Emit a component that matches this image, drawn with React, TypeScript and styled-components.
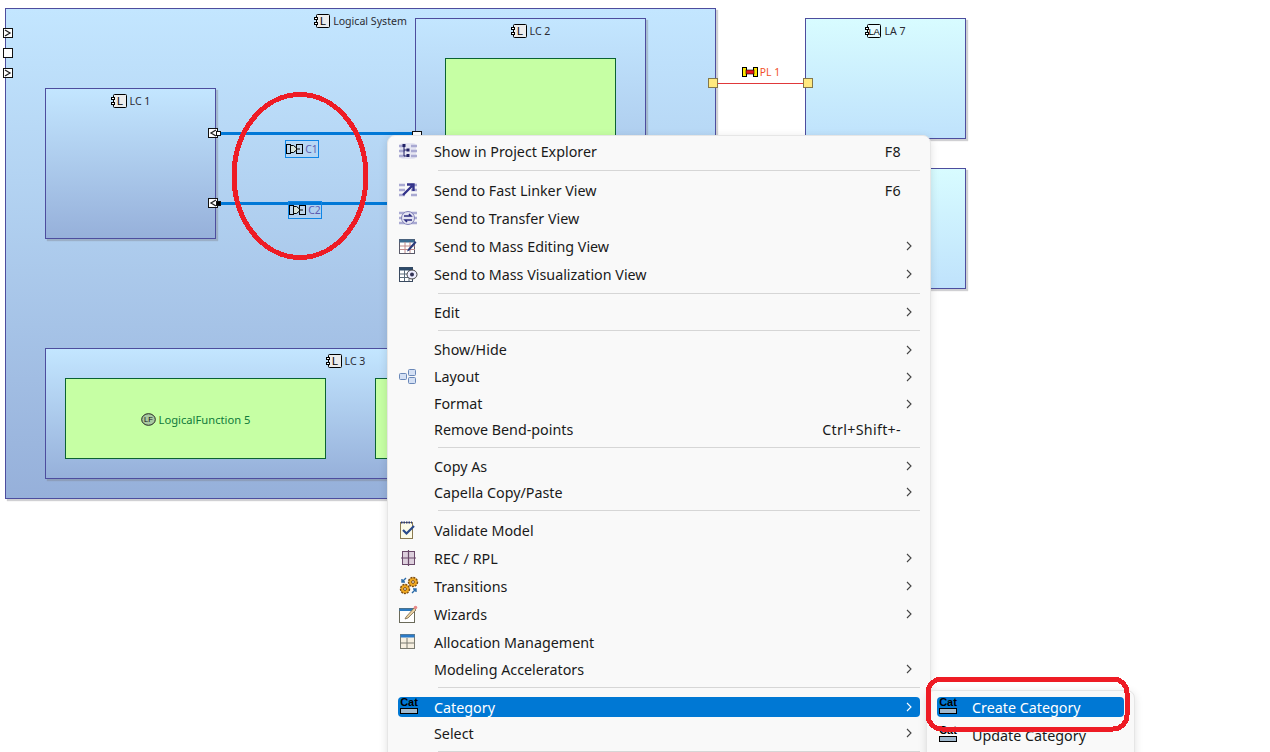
import React from "react";
import styled, { createGlobalStyle } from "styled-components";

const Global = createGlobalStyle`
  html, body { margin: 0; padding: 0; background: #fff; overflow: hidden; }
  body { font-family: "Noto Sans", "Liberation Sans", sans-serif; }
  svg { flex: none; display: block; }
`;

const Canvas = styled.div`
  position: relative;
  width: 1270px;
  height: 752px;
  overflow: hidden;
  background: #fff;
`;

const Node = styled.div<{ $x: number; $y: number; $w: number; $h: number; $kind?: "sys" | "actor" }>`
  position: absolute;
  left: ${(p) => p.$x}px;
  top: ${(p) => p.$y}px;
  width: ${(p) => p.$w}px;
  height: ${(p) => p.$h}px;
  box-sizing: border-box;
  border: 1px solid #4d4d9e;
  background: ${(p) =>
    p.$kind === "actor"
      ? "linear-gradient(180deg, #d8fcff 0%, #bfe2fc 100%)"
      : "linear-gradient(180deg, #c3e6ff 0%, #96b0da 100%)"};
  box-shadow: 2px 2px 1px rgba(120, 120, 130, 0.35);
  display: flex;
  justify-content: center;
  padding-top: 4px;
`;

const Title = styled.div`
  display: flex;
  align-items: center;
  gap: 3px;
  height: 15px;
  font-size: 10.6px;
  color: #2b2b33;
  white-space: nowrap;
`;

const FunctionBox = styled.div<{ $x: number; $y: number; $w: number; $h: number }>`
  position: absolute;
  left: ${(p) => p.$x}px;
  top: ${(p) => p.$y}px;
  width: ${(p) => p.$w}px;
  height: ${(p) => p.$h}px;
  box-sizing: border-box;
  padding-top: 1px;
  background: #c6ffa4;
  border: 1px solid #0b6233;
  display: flex;
  align-items: center;
  justify-content: center;
  gap: 3px;
  font-size: 11.2px;
  color: #0f7a3a;
`;

const Port = styled.div<{ $x: number; $y: number; $size?: number; $yellow?: boolean }>`
  position: absolute;
  left: ${(p) => p.$x}px;
  top: ${(p) => p.$y}px;
  width: ${(p) => p.$size ?? 10}px;
  height: ${(p) => p.$size ?? 10}px;
  box-sizing: border-box;
  background: ${(p) => (p.$yellow ? "#ffe97f" : "#fff")};
  border: 1px solid ${(p) => (p.$yellow ? "#84784a" : "#111")};
  display: flex;
  align-items: center;
  justify-content: center;
`;

const Dot = styled.div<{ $x: number; $y: number; $dark?: boolean }>`
  position: absolute;
  left: ${(p) => p.$x}px;
  top: ${(p) => p.$y}px;
  width: 5px;
  height: 5px;
  box-sizing: border-box;
  background: ${(p) => (p.$dark ? "#000" : "#fff")};
  border: 1px solid #111;
`;

const Wire = styled.div<{ $x: number; $y: number; $w: number; $thin?: boolean }>`
  position: absolute;
  left: ${(p) => p.$x}px;
  top: ${(p) => p.$y}px;
  width: ${(p) => p.$w}px;
  height: ${(p) => (p.$thin ? 1 : 3)}px;
  background: ${(p) => (p.$thin ? "#e0383a" : "#0078d7")};
`;

const WireLabel = styled.div<{ $x: number; $y: number; $w?: number; $selected?: boolean; $color?: string }>`
  position: absolute;
  left: ${(p) => p.$x}px;
  top: ${(p) => p.$y}px;
  width: ${(p) => p.$w ?? 34}px;
  height: 18px;
  box-sizing: border-box;
  border: ${(p) => (p.$selected ? "1px solid #0f86e6" : "1px solid transparent")};
  display: flex;
  align-items: center;
  justify-content: center;
  gap: 2px;
  font-size: 10.4px;
  color: ${(p) => p.$color ?? "#5c5cb0"};
  white-space: nowrap;
`;

const Annotation = styled.svg`
  position: absolute;
  left: 0;
  top: 0;
  width: 1270px;
  height: 752px;
  pointer-events: none;
  z-index: 5;
`;

const Menu = styled.div`
  position: absolute;
  left: 387px;
  top: 135px;
  width: 544px;
  box-sizing: border-box;
  padding: 1px 10px 12px;
  background: #f9f9f9;
  border: 1px solid #e6e6e6;
  border-radius: 8px;
  box-shadow: 0 2px 8px rgba(0, 0, 0, 0.12);
  z-index: 2;
`;

const SubMenu = styled.div`
  position: absolute;
  left: 926px;
  top: 690px;
  width: 209px;
  height: 80px;
  box-sizing: border-box;
  padding: 6px 10px 0;
  background: #f9f9f9;
  border: 1px solid #e6e6e6;
  border-radius: 8px;
  box-shadow: 0 2px 8px rgba(0, 0, 0, 0.12);
  z-index: 3;
`;

const Row = styled.div<{ $h: number; $active?: boolean; $after?: number; $before?: number }>`
  display: flex;
  align-items: center;
  height: ${(p) => p.$h}px;
  margin-top: ${(p) => p.$before ?? 0}px;
  margin-bottom: ${(p) => p.$after ?? 0}px;
  border-radius: 4px;
  font-size: 14.3px;
  color: ${(p) => (p.$active ? "#fff" : "#1a1a1a")};
  background: ${(p) => (p.$active ? "#0078d4" : "transparent")};
  white-space: nowrap;
`;

const IconSlot = styled.div<{ $w?: number }>`
  flex: 0 0 ${(p) => p.$w ?? 36}px;
  display: flex;
  align-items: center;
  box-sizing: border-box;
  padding-left: 1px;
`;

const Label = styled.span`
  flex: 1;
`;

const Shortcut = styled.span`
  color: #1a1a1a;
  letter-spacing: 0.3px;
`;

const ChevronSlot = styled.div`
  flex: 0 0 19px;
  display: flex;
  justify-content: center;
  padding-right: 3px;
  box-sizing: border-box;
`;

const Separator = styled.div`
  height: 11px;
  box-sizing: border-box;
  padding: 5px 0 0 40px;
  &::before {
    content: "";
    display: block;
    height: 1px;
    background: #d6d6d6;
  }
`;

const Chevron = ({ color = "#444" }: { color?: string }) => (
  <svg width="6" height="10" viewBox="0 0 6 10">
    <path d="M1 1l4 4-4 4" fill="none" stroke={color} strokeWidth="1.1" />
  </svg>
);

const ComponentIcon = ({ letter }: { letter: string }) => (
  <svg width="16" height="14" viewBox="0 0 16 14">
    <rect x="2.5" y="0.5" width="13" height="13" rx="1" fill={letter === "L" ? "#ececec" : "#e6fbff"} stroke="#000" />
    <rect x="0.5" y="3.5" width="3" height="2" fill="#fff" stroke="#000" />
    <rect x="0.5" y="8.5" width="3" height="2" fill="#fff" stroke="#000" />
    <text
      x="9"
      y="11"
      textAnchor="middle"
      fontFamily="Liberation Sans, sans-serif"
      fontSize={letter === "L" ? 11 : 9.5}
      letterSpacing={letter === "L" ? 0 : -0.4}
      fill="#000"
    >
      {letter}
    </text>
  </svg>
);

const ExchangeIcon = () => (
  <svg width="17" height="10" viewBox="0 0 17 10">
    <rect x="0.5" y="0.5" width="4" height="9" fill="#c0d6ea" stroke="#000" />
    <rect x="10.5" y="0.5" width="6" height="9" fill="#c0d6ea" stroke="#000" />
    <path d="M4.5 1.5h3l3 2.5v2l-3 2.5h-3z" fill="#d5e2da" stroke="#000" />
    <path d="M10 5h4" stroke="#000" />
  </svg>
);

const LinkIcon = () => (
  <svg width="16" height="10" viewBox="0 0 16 10">
    <rect x="0.5" y="0.5" width="4" height="9" fill="#ffe600" stroke="#000" />
    <rect x="11.5" y="0.5" width="4" height="9" fill="#ffe600" stroke="#000" />
    <rect x="4" y="3" width="8" height="4" fill="#e8141c" stroke="#000" strokeWidth="0.6" />
  </svg>
);

const FunctionIcon = () => (
  <svg width="15" height="13" viewBox="0 0 15 13">
    <ellipse cx="7.5" cy="6.5" rx="6.8" ry="5.8" fill="#a8c8a0" stroke="#222" />
    <text x="7.5" y="9.2" textAnchor="middle" fontFamily="Liberation Sans, sans-serif" fontSize="7.5" fill="#111">
      LF
    </text>
  </svg>
);

const InPort = () => (
  <svg width="8" height="8" viewBox="0 0 8 8">
    <path d="M1 1l5 3-5 3" fill="none" stroke="#222" strokeWidth="1.3" />
  </svg>
);

const OutPort = () => (
  <svg width="8" height="8" viewBox="0 0 8 8">
    <path d="M7 1L2 4l5 3" fill="none" stroke="#222" strokeWidth="1.3" />
  </svg>
);

const Lines = () => (
  <path d="M0 4h6M0 9h6M0 14h6M12 4h6M12 9h6M12 14h6" stroke="#a9a9d2" strokeWidth="2.4" />
);

const ExplorerIcon = () => (
  <svg width="18" height="18" viewBox="0 0 18 18">
    <rect x="1" y="1" width="16" height="16" rx="3" fill="#e6e6f2" />
    <Lines />
    <path d="M5 3v11h3M5 8h3" stroke="#222266" fill="none" />
    <rect x="3.5" y="2" width="3" height="3" fill="#222266" />
    <rect x="7.5" y="6.5" width="3" height="3" fill="#222266" />
    <rect x="7.5" y="12" width="3" height="3" fill="#222266" />
  </svg>
);

const LinkerIcon = () => (
  <svg width="18" height="18" viewBox="0 0 18 18">
    <Lines />
    <path d="M4 14L13 5M8 3.5h6.5V10" stroke="#33338a" strokeWidth="2.4" fill="none" />
  </svg>
);

const TransferIcon = () => (
  <svg width="18" height="18" viewBox="0 0 18 18">
    <Lines />
    <circle cx="9" cy="9" r="6.5" fill="#e4e4f2" stroke="#8080b8" />
    <path d="M5 7h7l-2-2M13 11H6l2 2" stroke="#2c2c80" strokeWidth="1.5" fill="none" />
  </svg>
);

const TableEditIcon = () => (
  <svg width="18" height="18" viewBox="0 0 18 18">
    <rect x="0.5" y="2.5" width="15" height="14" fill="#fff" stroke="#5a5a6a" />
    <rect x="0.5" y="2.5" width="15" height="3" fill="#3a6a90" />
    <path d="M1 9h15M1 12.5h15M6 5v11M11 5v11" stroke="#c08a8a" />
    <path d="M9 12l7-8 1.5 1.5-7 8-2.5 1z" fill="#2a3a7a" />
  </svg>
);

const TableViewIcon = () => (
  <svg width="19" height="18" viewBox="0 0 19 18">
    <rect x="0.5" y="2.5" width="13" height="14" fill="#fff" stroke="#3a4a60" />
    <rect x="0.5" y="2.5" width="13" height="3" fill="#2c4a6a" />
    <path d="M1 9h13M1 12.5h13M5.5 5v11M10 5v11" stroke="#5a6a7a" />
    <ellipse cx="13" cy="9.5" rx="5" ry="4.5" fill="#eef" stroke="#444" />
    <circle cx="13" cy="9.5" r="2" fill="#335" />
  </svg>
);

const LayoutIcon = () => (
  <svg width="18" height="16" viewBox="0 0 18 16">
    <rect x="0.5" y="4.5" width="7" height="6" rx="1" fill="#d4e0f4" stroke="#6a88b8" />
    <rect x="9.5" y="0.5" width="7" height="6" rx="1" fill="#d4e0f4" stroke="#6a88b8" />
    <rect x="9.5" y="8.5" width="7" height="6" rx="1" fill="#d4e0f4" stroke="#6a88b8" />
  </svg>
);

const ValidateIcon = () => (
  <svg width="18" height="20" viewBox="0 0 18 20">
    <rect x="1.5" y="2.5" width="12" height="16" fill="#fdfbe8" stroke="#8a7a50" />
    <path d="M2 2.5h11" stroke="#2a3a7a" strokeWidth="2" strokeDasharray="1.5 1" />
    <path d="M4 10l3.5 3.5L15 6" stroke="#2a4a8a" strokeWidth="2.2" fill="none" />
  </svg>
);

const GridIcon = () => (
  <svg width="18" height="18" viewBox="0 0 18 18">
    <rect x="3.5" y="2.5" width="12" height="13" fill="#ddd0dd" stroke="#6a4a6a" />
    <path d="M9.5 1v16M2 9h15" stroke="#6a4a6a" strokeWidth="1.2" />
  </svg>
);

const GearsIcon = () => (
  <svg width="20" height="20" viewBox="0 0 20 20">
    <circle cx="14" cy="6" r="4.5" fill="#f0a820" stroke="#7a4a10" strokeWidth="1.4" strokeDasharray="2 1" />
    <circle cx="14" cy="6" r="1.4" fill="#fff" stroke="#7a4a10" />
    <circle cx="6" cy="13" r="4.5" fill="#f0a820" stroke="#7a4a10" strokeWidth="1.4" strokeDasharray="2 1" />
    <circle cx="6" cy="13" r="1.4" fill="#fff" stroke="#7a4a10" />
    <path d="M7 2L3 6M3 3v3h3M13 17l4-4M17 16v-3h-3" stroke="#2a6aa8" strokeWidth="1.4" fill="none" />
  </svg>
);

const WizardIcon = () => (
  <svg width="19" height="20" viewBox="0 0 19 20">
    <rect x="0.5" y="4.5" width="15" height="14" fill="#fff" stroke="#6a6a5a" />
    <rect x="0.5" y="4.5" width="15" height="2.5" fill="#2a7ac0" />
    <path d="M7 13l8-9 2 2-8 8-3 1z" fill="#e8d0a0" stroke="#7a6a50" strokeWidth="0.8" />
    <circle cx="16.5" cy="3.5" r="1.8" fill="#e88a8a" />
  </svg>
);

const AllocationIcon = () => (
  <svg width="18" height="18" viewBox="0 0 18 18">
    <rect x="1.5" y="1.5" width="14" height="14" fill="#f6efe0" stroke="#7a7a70" />
    <rect x="1.5" y="1.5" width="14" height="3" fill="#2a7ac8" />
    <path d="M2 10h14M8 5v11" stroke="#7a7a70" />
  </svg>
);

const CatIcon = () => (
  <svg width="20" height="20" viewBox="0 0 20 20">
    <text x="10" y="9" textAnchor="middle" fontFamily="Liberation Sans, sans-serif" fontSize="11" fontWeight="bold" fill="#000">
      Cat
    </text>
    <rect x="1.5" y="11.5" width="17" height="5" fill="#9fb8cc" stroke="#000" />
  </svg>
);

type Item =
  | { sep: true }
  | {
      sep?: false;
      label: string;
      h?: number;
      icon?: React.ReactNode;
      shortcut?: string;
      more?: boolean;
      active?: boolean;
      before?: number;
      after?: number;
    };

const items: Item[] = [
  { label: "Show in Project Explorer", icon: <ExplorerIcon />, shortcut: "F8", h: 28 },
  { sep: true },
  { label: "Send to Fast Linker View", icon: <LinkerIcon />, shortcut: "F6", h: 28 },
  { label: "Send to Transfer View", icon: <TransferIcon />, h: 28 },
  { label: "Send to Mass Editing View", icon: <TableEditIcon />, more: true, h: 28 },
  { label: "Send to Mass Visualization View", icon: <TableViewIcon />, more: true, h: 28 },
  { sep: true },
  { label: "Edit", more: true, h: 26 },
  { sep: true },
  { label: "Show/Hide", more: true, h: 27 },
  { label: "Layout", icon: <LayoutIcon />, more: true, h: 27 },
  { label: "Format", more: true, h: 27 },
  { label: "Remove Bend-points", shortcut: "Ctrl+Shift+-", h: 25 },
  { sep: true },
  { label: "Copy As", more: true, h: 26 },
  { label: "Capella Copy/Paste", more: true, h: 26 },
  { sep: true },
  { label: "Validate Model", icon: <ValidateIcon />, h: 28 },
  { label: "REC / RPL", icon: <GridIcon />, more: true, h: 28 },
  { label: "Transitions", icon: <GearsIcon />, more: true, h: 28 },
  { label: "Wizards", icon: <WizardIcon />, more: true, h: 28 },
  { label: "Allocation Management", icon: <AllocationIcon />, h: 28 },
  { label: "Modeling Accelerators", more: true, h: 26 },
  { sep: true },
  { label: "Category", icon: <CatIcon />, more: true, active: true, h: 20, before: 4, after: 3 },
  { label: "Select", more: true, h: 26 },
  { sep: true },
];

export default function App() {
  return (
    <Canvas>
      <Global />
      <Node $x={5} $y={8} $w={711} $h={491}>
        <Title>
          <ComponentIcon letter="L" />
          Logical System
        </Title>
      </Node>
      <Port $x={3} $y={28}><InPort /></Port>
      <Port $x={3} $y={48} />
      <Port $x={3} $y={68}><InPort /></Port>

      <Node $x={45} $y={88} $w={171} $h={151}>
        <Title>
          <ComponentIcon letter="L" />
          LC 1
        </Title>
      </Node>
      <Node $x={415} $y={18} $w={231} $h={271}>
        <Title>
          <ComponentIcon letter="L" />
          LC 2
        </Title>
      </Node>
      <FunctionBox $x={445} $y={58} $w={171} $h={201} />

      <Node $x={45} $y={348} $w={601} $h={131}>
        <Title>
          <ComponentIcon letter="L" />
          LC 3
        </Title>
      </Node>
      <FunctionBox $x={65} $y={378} $w={261} $h={81}>
        <FunctionIcon />
        LogicalFunction 5
      </FunctionBox>
      <FunctionBox $x={375} $y={378} $w={250} $h={81} />

      <Node $x={805} $y={18} $w={161} $h={121} $kind="actor">
        <Title>
          <ComponentIcon letter="LA" />
          LA 7
        </Title>
      </Node>
      <Node $x={805} $y={168} $w={161} $h={121} $kind="actor" />

      <Wire $x={718} $y={83} $w={85} $thin />
      <Port $x={708} $y={78} $yellow />
      <Port $x={803} $y={78} $yellow />
      <WireLabel $x={741} $y={63} $w={40} $color="#f2502a">
        <LinkIcon />
        PL&nbsp;1
      </WireLabel>

      <Wire $x={218} $y={132} $w={198} />
      <Wire $x={218} $y={202} $w={172} />
      <Port $x={208} $y={128}><OutPort /></Port>
      <Dot $x={216} $y={131} />
      <Port $x={208} $y={198}><OutPort /></Port>
      <Dot $x={216} $y={201} $dark />
      <Port $x={412} $y={131} />
      <WireLabel $x={285} $y={140} $selected>
        <ExchangeIcon />
        C1
      </WireLabel>
      <WireLabel $x={288} $y={201} $selected>
        <ExchangeIcon />
        C2
      </WireLabel>

      <Menu>
        {items.map((item, i) =>
          item.sep ? (
            <Separator key={i} />
          ) : (
            <Row key={i} $h={item.h ?? 28} $active={item.active} $before={item.before} $after={item.after}>
              <IconSlot>{item.icon}</IconSlot>
              <Label>{item.label}</Label>
              {item.shortcut && <Shortcut>{item.shortcut}</Shortcut>}
              <ChevronSlot>{item.more && <Chevron color={item.active ? "#fff" : "#444"} />}</ChevronSlot>
            </Row>
          )
        )}
      </Menu>

      <SubMenu>
        <Row $h={20} $active $after={4}>
          <IconSlot $w={35}>
            <CatIcon />
          </IconSlot>
          <Label>Create Category</Label>
        </Row>
        <Row $h={28}>
          <IconSlot $w={35}>
            <CatIcon />
          </IconSlot>
          <Label>Update Category</Label>
        </Row>
      </SubMenu>

      <Annotation viewBox="0 0 1270 752">
        <ellipse cx="300" cy="176" rx="66" ry="81.5" fill="none" stroke="#ee1c25" strokeWidth="5" shapeRendering="crispEdges" />
        <rect x="928" y="679" width="199" height="50" rx="14" fill="none" stroke="#ee1c25" strokeWidth="5" shapeRendering="crispEdges" />
      </Annotation>
    </Canvas>
  );
}
